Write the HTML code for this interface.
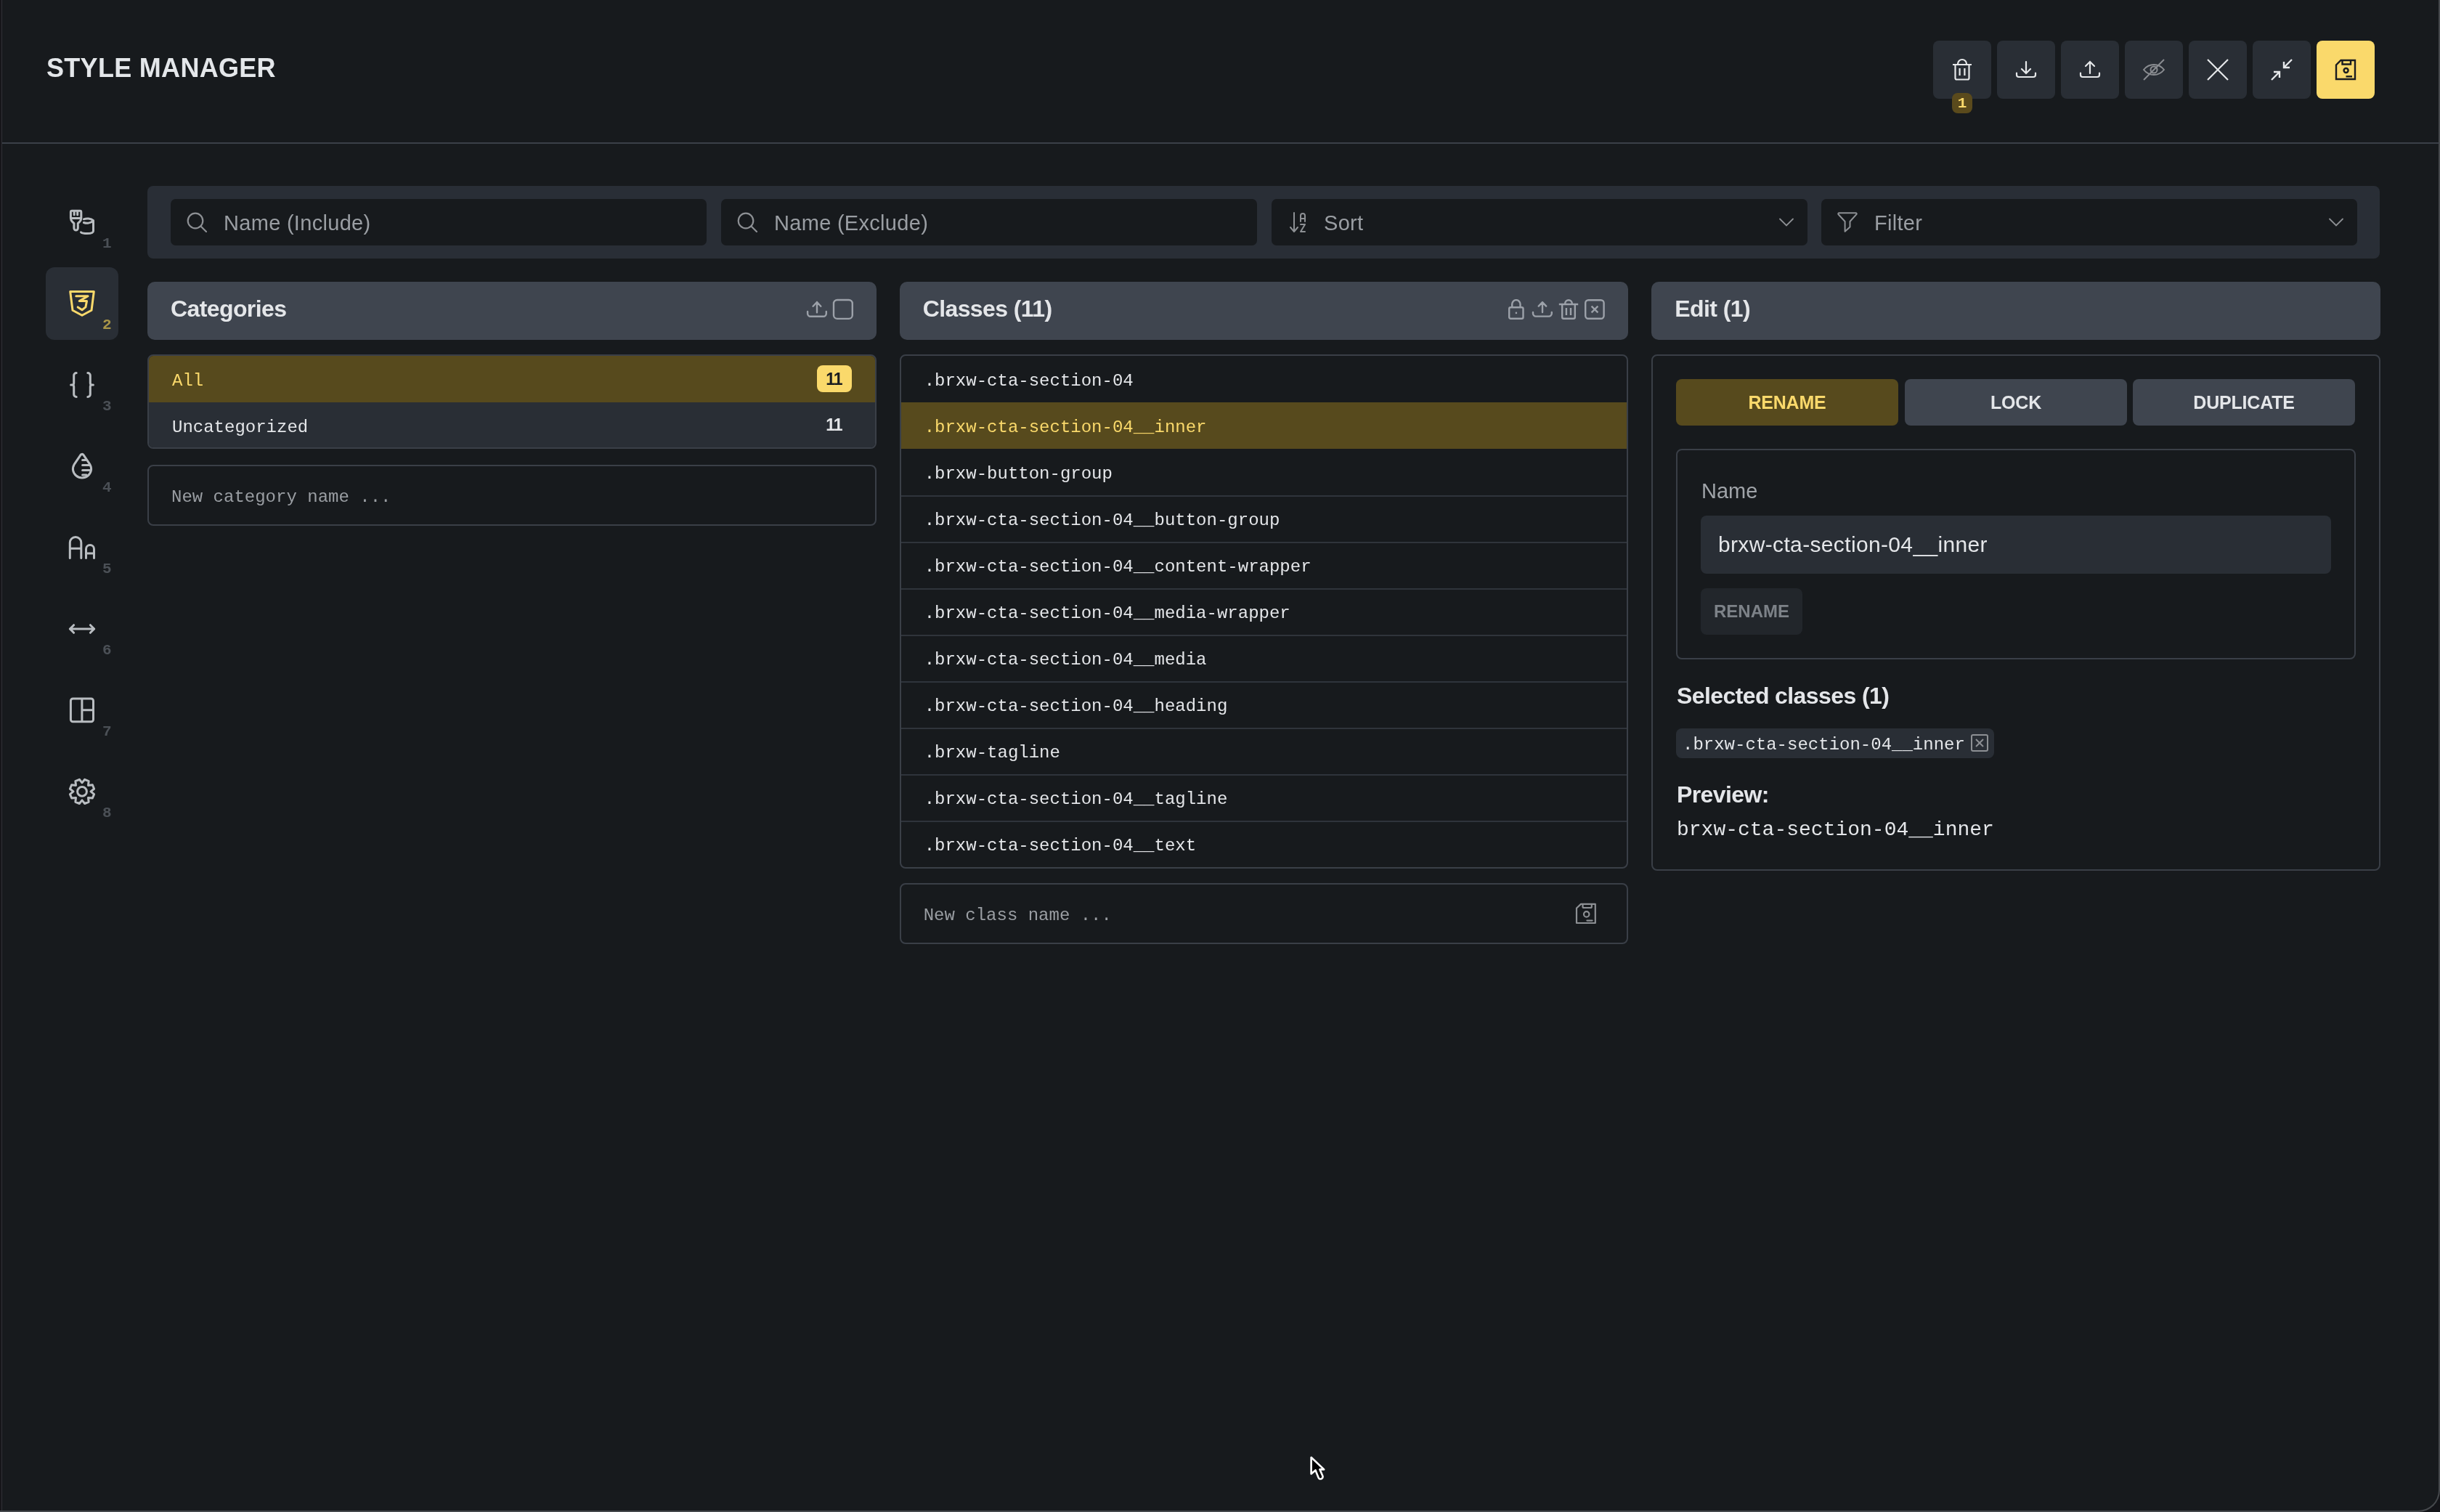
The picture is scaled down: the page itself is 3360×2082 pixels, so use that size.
<!DOCTYPE html>
<html><head><meta charset="utf-8">
<style>
*{box-sizing:border-box;margin:0;padding:0}
html,body{width:3360px;height:2082px;overflow:hidden;background:#141519}
body{position:relative;font-family:"Liberation Sans",sans-serif;color:#e4e6e9}
.abs{position:absolute}
.win{position:absolute;left:0;top:0;width:3360px;height:2082px;background:#171a1d;border-right:2px solid #45484c;border-bottom:2px solid #45484c;border-bottom-right-radius:30px}
.lstrip{position:absolute;left:0;top:0;width:2px;height:2080px;background:#16161a}
.lline{position:absolute;left:2px;top:0;width:1px;height:2080px;background:#303136}
.mono{font-family:"Liberation Mono",monospace}
.title{left:64px;top:72px;letter-spacing:0.3px;font-size:36px;font-weight:bold;color:#e4e7ea;line-height:44px;white-space:nowrap}
.hline{left:3px;top:196px;width:3355px;height:2px;background:#3b4048}
.tbtn{top:56px;width:80px;height:80px;border-radius:8px;background:#292e35;display:flex;align-items:center;justify-content:center}
.tbtn svg{display:block}
.badge1{left:2688px;top:128px;width:28px;height:28px;border-radius:8px;background:#5a4a1c;color:#fad96b;font-family:"Liberation Mono",monospace;font-weight:bold;font-size:21px;display:flex;align-items:center;justify-content:center}
.side{left:63px;width:100px;height:100px;border-radius:12px}
.side svg{position:absolute;left:26px;top:26px}
.side .num{position:absolute;left:78px;top:68px;font-family:"Liberation Mono",monospace;font-weight:bold;font-size:21px;line-height:24px;color:#4b5056}
.toolbar{left:203px;top:256px;width:3074px;height:100px;background:#292e36;border-radius:8px}
.inp{top:274px;height:64px;width:738px;background:#171a1d;border-radius:7px;font-size:29px;letter-spacing:0.3px;color:#9a9ea3;line-height:66px}
.inp svg{position:absolute}
.inp span{position:absolute;top:0}
.phead{top:388px;height:80px;background:#3f454f;border-radius:10px;width:1003.67px;font-weight:bold;font-size:32px;letter-spacing:-0.6px;line-height:74px;padding-left:32px;color:#e4e6e9}
.phead svg{position:absolute;top:12px}
.list{top:488px;width:1003.67px;border:2px solid #3a3f47;border-radius:8px;overflow:hidden}
.row{height:64px;font-family:"Liberation Mono",monospace;font-size:24px;line-height:70px;padding-left:32px;color:#e4e6e9;position:relative;white-space:nowrap}
.sep{border-top:2px solid #2f343b;line-height:66px;height:64px}
.sel{background:#574a1d;color:#fad96b}
.newinp{width:1003.67px;height:84px;border:2px solid #3a3f47;border-radius:8px;font-family:"Liberation Mono",monospace;font-size:24px;line-height:86px;padding-left:31px;color:#9a9ea3}
.ebtn{top:522px;height:64px;width:306px;border-radius:8px;font-weight:bold;font-size:25px;line-height:64px;text-align:center;letter-spacing:-0.2px}
#root{position:absolute;left:0;top:0;width:3360px;height:2082px;will-change:transform}
@media (max-width:2400px){html{zoom:0.5}}
</style></head><body><div id="root">
<div class="win"></div><div class="lstrip"></div><div class="lline"></div>

<div class="abs title">STYLE MANAGER</div>

<!-- top buttons -->
<div class="abs tbtn" style="left:2662px">
<svg width="32" height="32" viewBox="0 0 32 32" fill="none" stroke="#e6e8ea" stroke-width="2.2"><path d="M3 9H29M10 9V8a6 6 0 0 1 12 0v1M6.5 9V27.5a2 2 0 0 0 2 2h15a2 2 0 0 0 2-2V9M12.6 14v10M19.4 14v10"/></svg>
</div>
<div class="abs badge1">1</div>
<div class="abs tbtn" style="left:2750px">
<svg width="32" height="32" viewBox="0 0 32 32" fill="none" stroke="#e6e8ea" stroke-width="2.2" stroke-linecap="round"><path d="M16 5v16M10 15l6 6l6-6M3 20.5v2.5a3 3 0 0 0 3 3h20a3 3 0 0 0 3-3v-2.5"/></svg>
</div>
<div class="abs tbtn" style="left:2838px">
<svg width="32" height="32" viewBox="0 0 32 32" fill="none" stroke="#e6e8ea" stroke-width="2.2" stroke-linecap="round"><path d="M16 21V5M10 11l6-6l6 6M3 20.5v2.5a3 3 0 0 0 3 3h20a3 3 0 0 0 3-3v-2.5"/></svg>
</div>
<div class="abs tbtn" style="left:2926px">
<svg width="32" height="32" viewBox="0 0 32 32" fill="none" stroke="#8a8d91" stroke-width="2"><path d="M2 16c4-5 8-7 14-7s10 2 14 7c-4 5-8 7-14 7s-10-2-14-7z"/><circle cx="16" cy="16" r="4.5"/><path d="M2 30L30 2"/></svg>
</div>
<div class="abs tbtn" style="left:3014px">
<svg width="32" height="32" viewBox="0 0 32 32" fill="none" stroke="#e6e8ea" stroke-width="2.2"><path d="M2 2L30 30M30 2L2 30"/></svg>
</div>
<div class="abs tbtn" style="left:3102px">
<svg width="32" height="32" viewBox="0 0 32 32" fill="none" stroke="#e6e8ea" stroke-width="2.4"><path d="M30 2L19 13M19 5v8h8M2 30l11-11M5 19h8v8"/></svg>
</div>
<div class="abs tbtn" style="left:3190px;background:#fad96b">
<svg width="32" height="32" viewBox="0 0 32 32" fill="none" stroke="#1a1c20" stroke-width="2.4"><path d="M9.5 3h19.5v26H3V9.5z M11.5 3v5.5h11.5V3"/><circle cx="16.6" cy="17" r="3"/><path d="M16.5 25.3h8.5"/></svg>
</div>

<div class="abs hline"></div>

<!-- sidebar -->
<div class="abs side" style="top:256px">
<svg width="48" height="48" viewBox="0 0 48 48" fill="none" stroke="#b9bdc1" stroke-width="3" stroke-linejoin="round" stroke-linecap="round"><path d="M8.4 18.4V10a1.7 1.7 0 0 1 1.7-1.7h11a1.7 1.7 0 0 1 1.7 1.7v8.4c0 2.5-1 3.6-2.5 5.2l-2 2v6.6a2.7 2.7 0 0 1-5.4 0v-6.6l-2-2c-1.5-1.6-2.5-2.7-2.5-5.2z M8.4 18.4H22.8 M13.2 8.3v5.5 M17.7 8.3v5.5"/><path d="M26.4 19.8c3.5-1.3 9.5-1.3 13.1 1.9 M26.4 24.5c3.5 1.3 9.5 1.3 13.1-2.8 M39.5 21.7V36c0 3-5 3.6-8.5 3.6c-3.5 0-7-.6-8.5-1.8"/></svg>
<span class="num">1</span></div>
<div class="abs side" style="top:368px;background:#292e35">
<svg width="48" height="48" viewBox="0 0 48 48" fill="none" stroke="#fad96b" stroke-width="3" stroke-linejoin="round" stroke-linecap="round"><path d="M7.7 7.5H40.3L37 33.3L24 40.2L11 33.3Z M15.8 13.8H32.1L20.2 20.6H30.5L28.9 28.9L24 32.7L18.2 28.9"/></svg>
<span class="num" style="color:#a89548">2</span></div>
<div class="abs side" style="top:480px">
<svg width="48" height="48" viewBox="0 0 48 48" fill="none" stroke="#b9bdc1" stroke-width="3" stroke-linecap="round" stroke-linejoin="round"><path d="M16.2 7.5a3.5 3.5 0 0 0-3.5 3.5V21.5q0 2.5-2.5 2.5h-1.6h1.6q2.5 0 2.5 2.5V37a3.5 3.5 0 0 0 3.5 3.5 M31.8 7.5a3.5 3.5 0 0 1 3.5 3.5V21.5q0 2.5 2.5 2.5h1.6h-1.6q-2.5 0-2.5 2.5V37a3.5 3.5 0 0 1-3.5 3.5"/></svg>
<span class="num">3</span></div>
<div class="abs side" style="top:592px">
<svg width="48" height="48" viewBox="0 0 48 48" fill="none" stroke="#b9bdc1" stroke-width="3" stroke-linecap="round" stroke-linejoin="round"><path transform="translate(2.4 2.08) scale(1.8)" stroke-width="1.67" d="M7.502 19.423c2.602 2.105 6.395 2.105 8.996 0c2.602 -2.105 3.262 -5.708 1.566 -8.546l-4.89 -7.26c-.42 -.625 -1.287 -.803 -1.936 -.397a1.376 1.376 0 0 0 -.41 .397l-4.893 7.26c-1.695 2.838 -1.035 6.441 1.567 8.546z"/><path d="M24.6 15.6h4.2 M24.6 22.5h9 M24.6 29.4h9.8 M24.6 36h5.5"/></svg>
<span class="num">4</span></div>
<div class="abs side" style="top:704px">
<svg width="48" height="48" viewBox="0 0 48 48" fill="none" stroke="#b9bdc1" stroke-width="3" stroke-linecap="round"><path d="M7.3 38.5V17.25a7.75 7.75 0 0 1 15.5 0V38.5 M7.3 25.2H22.8 M29.5 38.5V26a5.5 5.5 0 0 1 11 0V38.5 M29.5 32.1H40.5"/></svg>
<span class="num">5</span></div>
<div class="abs side" style="top:816px">
<svg width="48" height="48" viewBox="0 0 48 48" fill="none" stroke="#b9bdc1" stroke-width="3" stroke-linecap="round" stroke-linejoin="round"><path d="M7.3 24H40.7 M12.6 18.7L7.3 24L12.6 29.3 M35.4 18.7L40.7 24L35.4 29.3"/></svg>
<span class="num">6</span></div>
<div class="abs side" style="top:928px">
<svg width="48" height="48" viewBox="0 0 48 48" fill="none" stroke="#b9bdc1" stroke-width="3"><rect x="8.4" y="7.9" width="31.1" height="31.9" rx="3"/><path d="M23.9 7.9v31.9 M23.9 23.8h15.6"/></svg>
<span class="num">7</span></div>
<div class="abs side" style="top:1040px">
<svg width="48" height="48" viewBox="0 0 48 48" fill="none" stroke="#b9bdc1" stroke-width="3" stroke-linejoin="round"><path d="M27.68 7.30 L33.13 9.56 L32.49 15.41 L38.34 14.77 L40.60 20.22 L36.00 23.90 L40.60 27.58 L38.34 33.03 L32.49 32.39 L33.13 38.24 L27.68 40.50 L24.00 35.90 L20.32 40.50 L14.87 38.24 L15.51 32.39 L9.66 33.03 L7.40 27.58 L12.00 23.90 L7.40 20.22 L9.66 14.77 L15.51 15.41 L14.87 9.56 L20.32 7.30 L24.00 11.90Z"/><circle cx="24" cy="23.9" r="6.4"/></svg>
<span class="num">8</span></div>

<!-- toolbar -->
<div class="abs toolbar"></div>
<div class="abs inp" style="left:235px">
<svg style="left:22px;top:18px" width="28" height="28" viewBox="0 0 28 28" fill="none" stroke="#8d9094" stroke-width="2.2" stroke-linecap="round"><circle cx="12" cy="12" r="10.3"/><path d="M19.5 19.5L27 27"/></svg>
<span style="left:73px">Name (Include)</span></div>
<div class="abs inp" style="left:993px">
<svg style="left:22px;top:18px" width="28" height="28" viewBox="0 0 28 28" fill="none" stroke="#8d9094" stroke-width="2.2" stroke-linecap="round"><circle cx="12" cy="12" r="10.3"/><path d="M19.5 19.5L27 27"/></svg>
<span style="left:73px">Name (Exclude)</span></div>
<div class="abs inp" style="left:1751px">
<svg style="left:25px;top:17px" width="28" height="32" viewBox="0 0 28 32" fill="none" stroke="#8d9094" stroke-width="2" stroke-linecap="round" stroke-linejoin="round"><path d="M6 2v26M1 22l5 6l5-6"/><path d="M15 14V6a3 3 0 0 1 6 0v8M15 10h6M15 18h6l-6 10h6"/></svg>
<span style="left:72px">Sort</span>
<svg style="left:698px;top:25px" width="22" height="14" viewBox="0 0 22 14" fill="none" stroke="#8d9094" stroke-width="1.8" stroke-linecap="round"><path d="M2 2.5l9 9l9-9"/></svg></div>
<div class="abs inp" style="left:2508px">
<svg style="left:22px;top:18px" width="30" height="28" viewBox="0 0 30 28" fill="none" stroke="#8d9094" stroke-width="2" stroke-linejoin="round"><path d="M2.5 1.2H25.5a1.2 1.2 0 0 1 0.9 2L17.5 13V20.6L10.6 26.8V13L1.6 3.2a1.2 1.2 0 0 1 0.9-2Z"/></svg>
<span style="left:73px">Filter</span>
<svg style="left:698px;top:25px" width="22" height="14" viewBox="0 0 22 14" fill="none" stroke="#8d9094" stroke-width="1.8" stroke-linecap="round"><path d="M2 2.5l9 9l9-9"/></svg></div>

<!-- Categories -->
<div class="abs phead" style="left:203px">Categories
<svg style="left:907px;top:25px" width="30" height="30" viewBox="0 0 30 30" fill="none" stroke="#9ca1a9" stroke-width="2.4" stroke-linecap="round" stroke-linejoin="round"><path d="M15 17.3V3 M9.6 8.8L15 3L20.3 8.8 M2.1 16v2.7a4 4 0 0 0 4 4h17.7a4 4 0 0 0 4-4V16"/></svg>
<svg style="left:943px;top:23px" width="30" height="30" viewBox="0 0 30 30" fill="none" stroke="#9ca1a9" stroke-width="2.4"><rect x="2" y="2" width="25.8" height="25.9" rx="5"/></svg>
</div>
<div class="abs list" style="left:203px">
<div class="row sel" style="font-size:24px">All<span style="position:absolute;left:920px;top:13px;width:48px;height:37px;border-radius:8px;background:#fad96b;color:#1a1c20;font-family:'Liberation Sans',sans-serif;font-weight:bold;font-size:23px;letter-spacing:-1px;line-height:38px;text-indent:-1px;text-align:center">11</span></div>
<div class="row" style="background:#292e35;height:62px;line-height:70px">Uncategorized<span style="position:absolute;left:920px;top:0;width:48px;line-height:62px;color:#e4e6e9;font-family:'Liberation Sans',sans-serif;font-weight:bold;font-size:23px;letter-spacing:-1px;text-indent:-1px;text-align:center">11</span></div>
</div>
<div class="abs newinp" style="left:203px;top:640px">New category name ...</div>

<!-- Classes -->
<div class="abs phead" style="left:1238.67px">Classes (11)
<svg style="left:836px;top:24px" width="26" height="30" viewBox="0 0 26 30" fill="none" stroke="#9ca1a9" stroke-width="2.4"><rect x="3.2" y="11.2" width="19.3" height="15.6" rx="2"/><path d="M7.2 11.2V6.8a5.65 5.65 0 0 1 11.3 0V11.2"/><circle cx="12.9" cy="18.9" r="1.3" fill="#9ca1a9" stroke="none"/></svg>
<svg style="left:869px;top:24px" width="32" height="30" viewBox="0 0 32 30" fill="none" stroke="#9ca1a9" stroke-width="2.4" stroke-linecap="round" stroke-linejoin="round"><path d="M16 18V4.1 M10.7 9.6L16 4.1L21.2 9.6 M3 18v1.6a4 4 0 0 0 4 4h17.8a4 4 0 0 0 4-4V18"/></svg>
<svg style="left:906px;top:24px" width="30" height="30" viewBox="0 0 30 30" fill="none" stroke="#9ca1a9" stroke-width="2.4"><path d="M1.8 7H28.2 M10.2 7V6a4.8 4.8 0 0 1 9.6 0V7 M6.2 7.5V24.8a2 2 0 0 0 2 2h13.6a2 2 0 0 0 2-2V7.5 M11.9 12v10 M18 12v10"/></svg>
<svg style="left:942px;top:24px" width="30" height="30" viewBox="0 0 30 30" fill="none" stroke="#9ca1a9" stroke-width="2.4"><rect x="2.2" y="1.2" width="25.4" height="25.6" rx="4"/><path d="M10.6 9.6L19.4 18.4M19.4 9.6L10.6 18.4"/></svg>
</div>
<div class="abs list" style="left:1238.67px">
<div class="row">.brxw-cta-section-04</div>
<div class="row sel">.brxw-cta-section-04__inner</div>
<div class="row">.brxw-button-group</div>
<div class="row sep">.brxw-cta-section-04__button-group</div>
<div class="row sep">.brxw-cta-section-04__content-wrapper</div>
<div class="row sep">.brxw-cta-section-04__media-wrapper</div>
<div class="row sep">.brxw-cta-section-04__media</div>
<div class="row sep">.brxw-cta-section-04__heading</div>
<div class="row sep">.brxw-tagline</div>
<div class="row sep">.brxw-cta-section-04__tagline</div>
<div class="row sep">.brxw-cta-section-04__text</div>
</div>
<div class="abs newinp" style="left:1238.67px;top:1216px">New class name ...
<svg style="position:absolute;left:928px;top:24px" width="32" height="32" viewBox="0 0 32 32" fill="none" stroke="#8d9094" stroke-width="2.2" stroke-linejoin="round" stroke-linecap="round"><path d="M8 2.9H27.8V29H2V8.5Z M10.5 3V6.5a1.5 1.5 0 0 0 1.5 1.5H21.3a1.5 1.5 0 0 0 1.5-1.5V3"/><circle cx="15.7" cy="16.9" r="3.7"/><path d="M16.4 25.6H23.6"/></svg>
</div>

<!-- Edit -->
<div class="abs phead" style="left:2274.33px">Edit (1)</div>
<div class="abs" style="left:2274.33px;top:488px;width:1003.67px;height:711px;border:2px solid #3a3f47;border-radius:8px"></div>
<div class="abs ebtn" style="left:2308px;background:#574a1d;color:#fad96b">RENAME</div>
<div class="abs ebtn" style="left:2623px;background:#3f454f;color:#e4e6e9">LOCK</div>
<div class="abs ebtn" style="left:2937px;background:#3f454f;color:#e4e6e9">DUPLICATE</div>
<div class="abs" style="left:2308px;top:618px;width:936px;height:290px;border:2px solid #3a3f47;border-radius:8px"></div>
<div class="abs" style="left:2343px;top:658px;font-size:29px;line-height:36px;color:#a0a4a9">Name</div>
<div class="abs" style="left:2342px;top:710px;width:868px;height:80px;border-radius:8px;background:#292e35;font-size:30px;letter-spacing:0.35px;line-height:80px;padding-left:24px;color:#e4e6e9">brxw-cta-section-04__inner</div>
<div class="abs" style="left:2342px;top:810px;width:140px;height:64px;border-radius:8px;background:#22262b;color:#7d8288;font-weight:bold;font-size:24px;line-height:64px;text-align:center">RENAME</div>
<div class="abs" style="left:2309px;top:938px;font-weight:bold;font-size:32px;letter-spacing:-0.6px;line-height:40px;color:#e4e6e9">Selected classes (1)</div>
<div class="abs" style="left:2308px;top:1003px;width:438px;height:41px;border-radius:8px;background:#292e35;font-family:'Liberation Mono',monospace;font-size:24px;line-height:46px;padding-left:9px;color:#e4e6e9;white-space:nowrap">.brxw-cta-section-04__inner
<svg style="position:absolute;left:406px;top:8px" width="24" height="24" viewBox="0 0 24 24" fill="none" stroke="#8d9094" stroke-width="2"><rect x="1" y="1" width="22" height="22" rx="2"/><path d="M7 7l10 10M17 7L7 17"/></svg></div>
<div class="abs" style="left:2309px;top:1074px;font-weight:bold;font-size:32px;letter-spacing:-0.6px;line-height:40px;color:#e4e6e9">Preview:</div>
<div class="abs" style="left:2309px;top:1123px;font-family:'Liberation Mono',monospace;font-size:28px;line-height:40px;color:#e4e6e9">brxw-cta-section-04__inner</div>

<!-- cursor -->
<svg class="abs" style="left:1800px;top:2001px" width="30" height="42" viewBox="0 0 30 42"><path d="M5.6 5.8V28.5L11.5 23.4L15.4 33.2Q16.6 36.4 19.6 35.2Q22.4 33.9 21.2 31L17.4 22.4H23.2Z" fill="#000" stroke="#fff" stroke-width="2.6" stroke-linejoin="round"/></svg>
</div></body></html>
